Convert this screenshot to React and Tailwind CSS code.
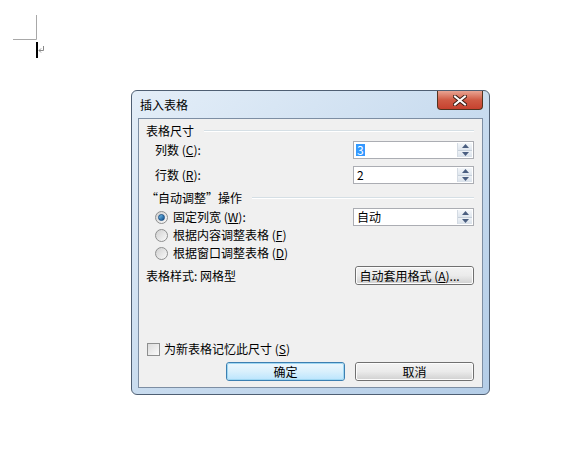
import React from "react";

const font = { fontFamily: '"Noto Sans CJK SC", "Liberation Sans", sans-serif' };

function Spin() {
  return (
    <div className="flex flex-col w-[15px] h-full border-l border-[#d4dbe3]">
      <div className="flex-1 flex items-center justify-center bg-gradient-to-b from-[#f4f7fa] to-[#dfe6ee] border-b border-[#c5cfda]">
        <svg width="7" height="4" viewBox="0 0 7 4"><path d="M0 4 L3.5 0 L7 4 Z" fill="#4a5e80" /></svg>
      </div>
      <div className="flex-1 flex items-center justify-center bg-gradient-to-b from-[#eef2f6] to-[#d9e1ea]">
        <svg width="7" height="4" viewBox="0 0 7 4"><path d="M0 0 L3.5 4 L7 0 Z" fill="#4a5e80" /></svg>
      </div>
    </div>
  );
}

function SpinBox({ children }) {
  return (
    <div className="flex w-[121px] h-[18px] border border-[#abadb3] bg-white p-[1px]">
      <div className="flex-1 flex items-center pl-[1px] text-[12px] leading-none">{children}</div>
      <Spin />
    </div>
  );
}

function Btn({ children, def, w = "w-[119px]" }) {
  return (
    <div
      className={`${w} h-[19px] rounded-[3px] border ${def ? "border-[#3c7fb1]" : "border-[#707070]"} flex`}
    >
      <div
        className={`flex-1 rounded-[2px] border ${def ? "border-[#9fd7f2]" : "border-[#fcfcfc]"} flex items-center justify-center text-[12px] leading-none bg-gradient-to-b ${def ? "from-[#eaf6fd] via-[#d9f0fc] to-[#bee6fd]" : "from-[#f2f2f2] via-[#ebebeb] to-[#d3d3d3]"}`}
      >
        {children}
      </div>
    </div>
  );
}

function Radio({ checked }) {
  return (
    <div className="w-[13px] h-[13px] rounded-full border border-[#8e8f8f] bg-gradient-to-br from-[#d0d0d0] to-[#fafafa] flex items-center justify-center">
      {checked && (
        <div className="w-[7px] h-[7px] rounded-full bg-gradient-to-br from-[#74c3ef] to-[#0d4d8a] border border-[#1b4f85]" />
      )}
    </div>
  );
}

function GroupHead({ children }) {
  return (
    <div className="flex items-center h-[18px] pl-[7px] pr-[8px]">
      <span className="text-[12px] leading-none whitespace-nowrap">{children}</span>
      <div className="flex-1 ml-[10px] flex flex-col">
        <div className="h-px bg-[#d5dfe5]" />
        <div className="h-px bg-white" />
      </div>
    </div>
  );
}

const U = ({ c }) => (
  <span>
    (<span className="underline">{c}</span>)
  </span>
);

export default function App() {
  return (
    <div className="w-[580px] h-[455px] bg-white text-black relative overflow-hidden" style={font}>
      <svg width="60" height="62" className="block">
        <path d="M13 39.5 H36.5 V15" stroke="#a8a8a8" strokeWidth="1" fill="none" />
        <rect x="36" y="42" width="2" height="16" fill="#000" />
        <path d="M43.5 46 V50.5 H39 M41 48.5 L39 50.5 L41 52.5" stroke="#888" strokeWidth="1" fill="none" />
      </svg>

      <div className="ml-[131px] mt-[28px] w-[359px] h-[305px] rounded-[6px] border border-[#4f5f73] bg-gradient-to-br from-[#e4eef8] via-[#c9dcef] to-[#b4cde7] flex flex-col">
        <div className="h-[27px] flex items-start pl-[8px] pr-[6px]">
          <span className="text-[12px] leading-none mt-[8px]">插入表格</span>
          <div className="ml-auto w-[46px] h-[19px] rounded-b-[4px] border border-t-0 border-[#53331f] bg-gradient-to-b from-[#e8a493] via-[#cf5a44] to-[#c6412e] flex items-center justify-center">
            <svg width="14" height="11" viewBox="0 0 14 11">
              <path d="M2 1.5 L12 9.5 M12 1.5 L2 9.5" stroke="#3b1d14" strokeWidth="4" strokeLinecap="square" />
              <path d="M2 1.5 L12 9.5 M12 1.5 L2 9.5" stroke="#ffffff" strokeWidth="2" strokeLinecap="square" />
            </svg>
          </div>
        </div>

        <div className="mx-[6px] mb-[6px] flex-1 border border-[#7d8ea3] bg-[#f0f0f0] flex flex-col text-[12px] leading-none">
          <div className="h-[3px]" />
          <GroupHead>表格尺寸</GroupHead>
          <div className="flex items-center h-[18px] mt-[1px] pl-[16px] pr-[8px]">
            <span>列数 <U c="C" />:</span>
            <div className="ml-auto">
              <SpinBox>
                <span className="bg-[#3399ff] text-white px-[1px]">3</span>
              </SpinBox>
            </div>
          </div>
          <div className="flex items-center h-[18px] mt-[7px] pl-[16px] pr-[8px]">
            <span>行数 <U c="R" />:</span>
            <div className="ml-auto">
              <SpinBox>
                <span className="pl-[1px]">2</span>
              </SpinBox>
            </div>
          </div>
          <div className="mt-[5px]">
            <GroupHead>“自动调整”操作</GroupHead>
          </div>
          <div className="flex items-center h-[18px] mt-[1px] pl-[16px] pr-[8px]">
            <Radio checked />
            <span className="ml-[5px]">固定列宽 <U c="W" />:</span>
            <div className="ml-auto">
              <SpinBox>
                <span className="pl-[1px]">自动</span>
              </SpinBox>
            </div>
          </div>
          <div className="flex items-center h-[18px] pl-[16px]">
            <Radio />
            <span className="ml-[5px]">根据内容调整表格 <U c="F" /></span>
          </div>
          <div className="flex items-center h-[18px] pl-[16px]">
            <Radio />
            <span className="ml-[5px]">根据窗口调整表格 <U c="D" /></span>
          </div>
          <div className="flex items-center h-[19px] mt-[4px] pl-[7px] pr-[8px]">
            <span>表格样式: 网格型</span>
            <div className="ml-auto">
              <Btn>
                <span className="pr-[10px]">自动套用格式 <U c="A" />...</span>
              </Btn>
            </div>
          </div>
          <div className="flex-1" />
          <div className="flex items-center h-[18px] pl-[8px]">
            <div className="w-[13px] h-[13px] border border-[#8e8f8f] bg-gradient-to-br from-[#dcdcdc] to-[#fbfbfb]" />
            <span className="ml-[4px]">为新表格记忆此尺寸 <U c="S" /></span>
          </div>
          <div className="flex items-center gap-[10px] h-[19px] mt-[4px] mb-[6px] pl-[87px]">
            <Btn def>确定</Btn>
            <Btn>取消</Btn>
          </div>
        </div>
      </div>
    </div>
  );
}
